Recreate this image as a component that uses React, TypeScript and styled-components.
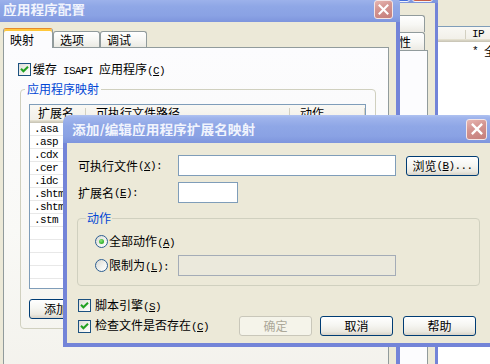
import React from "react";
import styled, { createGlobalStyle, css } from "styled-components";

const CJK = `"Noto Sans CJK SC", "Noto Sans", sans-serif`;
const MONO = `"Liberation Mono", "DejaVu Sans Mono", monospace`;

const GlobalStyle = createGlobalStyle`
  html, body { margin: 0; padding: 0; background: #ece9d8; overflow: hidden; }
  *, *::before, *::after { box-sizing: border-box; }
`;

const Desktop = styled.div`
  position: relative;
  width: 490px;
  height: 364px;
  overflow: hidden;
  background: #ece9d8;
  font-family: ${CJK};
  font-size: 12px;
  line-height: 14px;
  color: #000;
`;

const Win = styled.div<{ $x: number; $y: number; $w: number; $h: number }>`
  position: absolute;
  left: ${(p) => p.$x}px;
  top: ${(p) => p.$y}px;
  width: ${(p) => p.$w}px;
  height: ${(p) => p.$h}px;
  display: flex;
  flex-direction: column;
`;

const TitleBar = styled.div<{ $h: number; $pl: number; $bottom?: boolean }>`
  flex: none;
  height: ${(p) => p.$h}px;
  padding-left: ${(p) => p.$pl}px;
  display: flex;
  align-items: ${(p) => (p.$bottom ? "flex-end" : "center")};
  padding-bottom: ${(p) => (p.$bottom ? 1 : 0)}px;
  background: linear-gradient(
    180deg,
    #b0c3f1 0%,
    #9fb4ec 10%,
    #8fa7e6 40%,
    #8aa2e4 75%,
    #7e95dd 100%
  );
  border-radius: 7px 7px 0 0;
  overflow: hidden;
`;

const TitleText = styled.span`
  flex: 1;
  font-size: 13.7px;
  font-weight: 700;
  color: #f1f4fd;
  white-space: nowrap;
  overflow: hidden;
`;

const CloseBox = styled.div<{ $size: number; $mr: number }>`
  flex: none;
  width: ${(p) => p.$size}px;
  height: ${(p) => p.$size}px;
  margin-right: ${(p) => p.$mr}px;
  border: 1px solid #f4e6e6;
  border-radius: 3px;
  background: linear-gradient(160deg, #e7b6b1 0%, #d49591 40%, #c57e7b 100%);
  display: flex;
  align-items: center;
  justify-content: center;
`;

const CapButton = styled.div<{ $tone: "blue" | "red"; $mr: number }>`
  flex: none;
  width: 21px;
  height: 21px;
  margin-right: ${(p) => p.$mr}px;
  border: 1px solid #f2f4fb;
  border-radius: 3px;
  background: ${(p) =>
    p.$tone === "red"
      ? "linear-gradient(160deg, #e6a595 0%, #cf6a55 60%, #c0553f 100%)"
      : "linear-gradient(160deg, #9db8f3 0%, #5d84e2 60%, #3d68d8 100%)"};
`;

const Frame = styled.div<{ $b: number }>`
  flex: 1;
  min-height: 0;
  display: flex;
  flex-direction: column;
  background: #ece9d8;
  border: ${(p) => p.$b}px solid #7384d8;
  border-top: none;
`;

/* ---------- generic controls ---------- */

const Asc = styled.span`
  font-family: ${MONO};
  font-size: 11px;
  letter-spacing: -0.6px;
`;

const Mn = ({ k }: { k: string }) => (
  <Asc>
    (<u>{k}</u>)
  </Asc>
);

const CheckBoxBox = styled.span`
  flex: none;
  width: 13px;
  height: 13px;
  border: 1px solid #1c5180;
  background: linear-gradient(135deg, #dcdcd7 0%, #f1f1ec 55%, #ffffff 100%);
  display: flex;
  align-items: center;
  justify-content: center;
`;

const CheckBox = () => (
  <CheckBoxBox>
    <svg width="9" height="9" viewBox="0 0 9 9">
      <path d="M1 3.8 L3.4 6.3 L8 1.7" stroke="#21a121" strokeWidth="2" fill="none" />
    </svg>
  </CheckBoxBox>
);

const RadioCircle = styled.span`
  flex: none;
  width: 13px;
  height: 13px;
  border-radius: 50%;
  border: 1px solid #2c5e92;
  background: linear-gradient(135deg, #d8d8d2 0%, #f2f2ee 55%, #ffffff 100%);
  display: flex;
  align-items: center;
  justify-content: center;
`;

const RadioDot = styled.span`
  width: 5px;
  height: 5px;
  border-radius: 50%;
  background: radial-gradient(circle at 40% 35%, #8be57b 0%, #3fb93a 55%, #1f9a1f 100%);
`;

const CheckRow = styled.div<{ $mt?: number; $ml?: number; $h?: number }>`
  display: flex;
  align-items: center;
  height: ${(p) => p.$h ?? 13}px;
  margin-top: ${(p) => p.$mt ?? 0}px;
  margin-left: ${(p) => p.$ml ?? 0}px;
  white-space: nowrap;
`;

const CheckText = styled.span<{ $gap: number }>`
  margin-left: ${(p) => p.$gap}px;
  white-space: nowrap;
`;

const PushButton = styled.div<{ $w: number; $ml?: number; $mt?: number; $disabled?: boolean }>`
  flex: none;
  width: ${(p) => p.$w}px;
  height: 20px;
  margin-left: ${(p) => p.$ml ?? 0}px;
  margin-top: ${(p) => p.$mt ?? 0}px;
  display: flex;
  align-items: center;
  justify-content: center;
  border: 1px solid #003c74;
  border-radius: 3px;
  background: linear-gradient(180deg, #ffffff 0%, #f6f6f2 45%, #ebe9e1 80%, #d8d3c8 100%);
  white-space: nowrap;
  ${(p) =>
    p.$disabled &&
    css`
      border-color: #c9c7ba;
      background: #f5f4ea;
      color: #aca899;
    `}
`;

const TextBox = styled.div<{ $w: number; $disabled?: boolean }>`
  flex: none;
  width: ${(p) => p.$w}px;
  height: 21px;
  border: 1px solid #7f9db9;
  background: #ffffff;
  ${(p) =>
    p.$disabled &&
    css`
      border-color: #a4acb7;
      background: #ebe9dc;
    `}
`;

const Group = styled.fieldset<{ $mt: number; $ml: number; $pad: string }>`
  margin: ${(p) => p.$mt}px 0 0 ${(p) => p.$ml}px;
  padding: ${(p) => p.$pad};
  border: 1px solid #d0d0bf;
  border-radius: 4px;
  min-width: 0;
`;

const Legend = styled.legend<{ $px: number }>`
  padding: 0 ${(p) => p.$px}px;
  color: #0046d5;
  font-size: 12px;
  line-height: 14px;
`;

/* ---------- list view ---------- */

const ListView = styled.div<{ $h?: number; $ml?: number }>`
  margin-left: ${(p) => p.$ml ?? 0}px;
  height: ${(p) => (p.$h ? `${p.$h}px` : "auto")};
  border: 1px solid #7f9db9;
  background: #ffffff;
  overflow: hidden;
`;

const ListHeader = styled.div<{ $h: number }>`
  display: flex;
  height: ${(p) => p.$h}px;
  background: linear-gradient(180deg, #f9f8f4 0%, #f0eee6 100%);
  box-shadow: inset 0 -1px 0 #cbc7b8, inset 0 -2px 0 #d6d2c2, inset 0 -3px 0 #e4e0d0;
`;

const HeadCell = styled.div<{ $w?: number; $pl: number }>`
  flex: ${(p) => (p.$w ? `0 0 ${p.$w}px` : "1")};
  padding-left: ${(p) => p.$pl}px;
  padding-bottom: 2px;
  display: flex;
  align-items: center;
  white-space: nowrap;
  overflow: hidden;
  background: linear-gradient(#d3d0c1, #d3d0c1) right 3px / 1px calc(100% - 6px) no-repeat;
`;

const ListRow = styled.div<{ $h: number; $grid?: boolean }>`
  display: flex;
  height: ${(p) => p.$h}px;
  border-bottom: ${(p) => (p.$grid ? "1px solid #e8e8e8" : "none")};
`;

const Cell = styled.div<{ $w?: number; $pl: number }>`
  flex: ${(p) => (p.$w ? `0 0 ${p.$w}px` : "1")};
  padding-left: ${(p) => p.$pl}px;
  display: flex;
  align-items: center;
  white-space: nowrap;
  overflow: hidden;
`;

/* ---------- config dialog ---------- */

const ConfigClient = styled.div`
  flex: 1;
  display: flex;
  flex-direction: column;
  padding: 6px 7px 0 7px;
`;

const TabStrip = styled.div`
  position: relative;
  z-index: 1;
  display: flex;
  align-items: flex-end;
  height: 20px;
  margin-bottom: -1px;
`;

const Tab = styled.div<{ $w: number; $active?: boolean }>`
  flex: none;
  width: ${(p) => p.$w}px;
  height: ${(p) => (p.$active ? 20 : 16)}px;
  margin-bottom: ${(p) => (p.$active ? 0 : 1)}px;
  padding-left: 6px;
  display: flex;
  align-items: center;
  border: 1px solid #919b9c;
  border-bottom: none;
  border-radius: 3px 3px 0 0;
  white-space: nowrap;
  overflow: hidden;
  background: linear-gradient(180deg, #ffffff 0%, #f7f7f4 50%, #ebeae3 100%);
  ${(p) =>
    p.$active &&
    css`
      background: #fcfcfe;
      border-top: 1px solid #e68b2c;
      box-shadow: inset 0 2px 0 #ffc83c;
      padding-top: 2px;
    `}
`;

const TabPage = styled.div`
  flex: 1;
  display: flex;
  flex-direction: column;
  border: 1px solid #919b9c;
  background: linear-gradient(180deg, #fcfcfe 0%, #f9f9f6 55%, #f3f2ec 100%);
  padding: 15px 12px 0 14px;
`;

/* ---------- mapping dialog ---------- */

const MapBody = styled.div`
  flex: 1;
  display: flex;
  flex-direction: column;
  padding: 12px 11px 0 11px;
`;

const FieldRow = styled.div<{ $mt?: number; $ml?: number }>`
  display: flex;
  align-items: center;
  height: 21px;
  margin-top: ${(p) => p.$mt ?? 0}px;
  margin-left: ${(p) => p.$ml ?? 0}px;
`;

const FieldLabel = styled.div<{ $w: number }>`
  flex: none;
  width: ${(p) => p.$w}px;
  display: flex;
  align-items: center;
  white-space: nowrap;
`;

const BottomRow = styled.div`
  display: flex;
  align-items: center;
  height: 20px;
  margin-top: 4px;
  padding-right: 4px;
`;

const Spacer = styled.div`
  flex: 1;
`;

/* ---------- back windows ---------- */

const MidBody = styled.div`
  flex: 1;
  display: flex;
  flex-direction: column;
  padding: 12px 7px 0 0;
`;

const MidTabRow = styled.div<{ $h: number }>`
  display: flex;
  justify-content: flex-end;
  align-items: flex-end;
  height: ${(p) => p.$h}px;
  padding-right: 3px;
`;

const MidTab = styled.div<{ $w: number }>`
  flex: none;
  width: ${(p) => p.$w}px;
  height: 100%;
  display: flex;
  align-items: center;
  justify-content: center;
  border: 1px solid #919b9c;
  border-bottom: none;
  border-radius: 3px 3px 0 0;
  background: linear-gradient(180deg, #ffffff 0%, #f7f7f4 55%, #eceae3 100%);
  white-space: nowrap;
`;

const MidPage = styled.div`
  flex: 1;
  border: 1px solid #919b9c;
  background: #fcfcfe;
`;

const FarBody = styled.div`
  flex: 1;
  display: flex;
  flex-direction: column;
  padding: 26px 0 0 0;
  background: #ece9d8;
`;

const FarList = styled(ListView)`
  flex: 1;
`;

const XGlyph = ({ s }: { s: number }) => (
  <svg width={s} height={s} viewBox="0 0 10 10">
    <path d="M1.4 1.4 L8.6 8.6 M8.6 1.4 L1.4 8.6" stroke="#ffffff" strokeWidth="1.9" strokeLinecap="square" />
  </svg>
);

const mappings: [string, string, string][] = [
  [".asa", "C:\\WINDOWS\\system32\\inetsrv\\asp.dll", "GET,HEAD,POST,TRACE"],
  [".asp", "C:\\WINDOWS\\system32\\inetsrv\\asp.dll", "GET,HEAD,POST,TRACE"],
  [".cdx", "C:\\WINDOWS\\system32\\inetsrv\\asp.dll", "GET,HEAD,POST,TRACE"],
  [".cer", "C:\\WINDOWS\\system32\\inetsrv\\asp.dll", "GET,HEAD,POST,TRACE"],
  [".idc", "C:\\WINDOWS\\system32\\inetsrv\\httpodbc.dll", "OPTIONS,GET,HEAD,POST"],
  [".shtm", "C:\\WINDOWS\\system32\\inetsrv\\ssinc.dll", "GET,POST"],
  [".shtml", "C:\\WINDOWS\\system32\\inetsrv\\ssinc.dll", "GET,POST"],
  [".stm", "C:\\WINDOWS\\system32\\inetsrv\\ssinc.dll", "GET,POST"],
  ["", "", ""],
  ["", "", ""],
  ["", "", ""],
  ["", "", ""],
  ["", "", ""],
];

export default function App() {
  return (
    <>
      <GlobalStyle />
      <Desktop>
        {/* far window (behind everything) */}
        <Win $x={400} $y={-27} $w={130} $h={420}>
          <TitleBar $h={27} $pl={8}>
            <TitleText />
          </TitleBar>
          <Frame $b={4}>
            <FarBody>
              <FarList>
                <ListHeader $h={15}>
                  <HeadCell $w={61} $pl={6}>描述</HeadCell>
                  <HeadCell $pl={6}>
                    <Asc>IP&nbsp;</Asc>地址
                  </HeadCell>
                </ListHeader>
                <ListRow $h={18}>
                  <Cell $w={61} $pl={6} />
                  <Cell $pl={6}>
                    <Asc>*&nbsp;</Asc>全部未分配
                  </Cell>
                </ListRow>
              </FarList>
            </FarBody>
          </Frame>
        </Win>

        {/* middle window */}
        <Win $x={290} $y={-26} $w={148} $h={400}>
          <TitleBar $h={29} $pl={8} $bottom>
            <TitleText />
            <CapButton $tone="blue" $mr={2} />
            <CapButton $tone="red" $mr={5} />
          </TitleBar>
          <Frame $b={3}>
            <MidBody>
              <MidTabRow $h={17}>
                <MidTab $w={120}>自定义错误</MidTab>
              </MidTabRow>
              <MidTabRow $h={18}>
                <MidTab $w={88}>目录安全性</MidTab>
              </MidTabRow>
              <MidPage />
            </MidBody>
          </Frame>
        </Win>

        {/* application configuration dialog */}
        <Win $x={-8} $y={-4} $w={408} $h={390}>
          <TitleBar $h={26} $pl={11}>
            <TitleText>应用程序配置</TitleText>
            <CloseBox $size={19} $mr={7}>
              <XGlyph s={11} />
            </CloseBox>
          </TitleBar>
          <Frame $b={4}>
            <ConfigClient>
              <TabStrip>
                <Tab $w={50} $active>映射</Tab>
                <Tab $w={47}>选项</Tab>
                <Tab $w={47}>调试</Tab>
              </TabStrip>
              <TabPage>
                <CheckRow>
                  <CheckBox />
                  <CheckText $gap={2}>
                    缓存<Asc>&nbsp;ISAPI&nbsp;</Asc>应用程序<Mn k="C" />
                  </CheckText>
                </CheckRow>
                <Group $mt={6} $ml={2} $pad="8px 9px 9px 4px">
                  <Legend $px={2}>应用程序映射</Legend>
                  <ListView $h={185} $ml={4}>
                    <ListHeader $h={18}>
                      <HeadCell $w={56} $pl={8}>扩展名</HeadCell>
                      <HeadCell $w={204} $pl={10}>可执行文件路径</HeadCell>
                      <HeadCell $w={75} $pl={10}>动作</HeadCell>
                    </ListHeader>
                    {mappings.map(([ext, path, verbs], i) => (
                      <ListRow key={i} $h={13} $grid>
                        <Cell $w={56} $pl={4}>
                          <Asc>{ext}</Asc>
                        </Cell>
                        <Cell $w={204} $pl={6}>
                          <Asc>{path}</Asc>
                        </Cell>
                        <Cell $w={75} $pl={6}>
                          <Asc>{verbs}</Asc>
                        </Cell>
                      </ListRow>
                    ))}
                  </ListView>
                  <PushButton $w={90} $ml={4} $mt={10}>
                    添加<Mn k="D" />
                    <Asc>...</Asc>
                  </PushButton>
                </Group>
              </TabPage>
            </ConfigClient>
          </Frame>
        </Win>

        {/* add / edit mapping dialog */}
        <Win $x={63} $y={115} $w={432} $h={232}>
          <TitleBar $h={28} $pl={9}>
            <TitleText>添加/编辑应用程序扩展名映射</TitleText>
            <CloseBox $size={21} $mr={8}>
              <XGlyph s={12} />
            </CloseBox>
          </TitleBar>
          <Frame $b={4}>
            <MapBody>
              <FieldRow>
                <FieldLabel $w={100}>
                  可执行文件<Mn k="X" />
                  <Asc>:</Asc>
                </FieldLabel>
                <TextBox $w={218} />
                <PushButton $w={73} $ml={10}>
                  浏览<Mn k="B" />
                  <Asc>...</Asc>
                </PushButton>
              </FieldRow>
              <FieldRow $mt={6}>
                <FieldLabel $w={100}>
                  扩展名<Mn k="E" />
                  <Asc>:</Asc>
                </FieldLabel>
                <TextBox $w={60} />
              </FieldRow>
              <Group $mt={8} $ml={-1} $pad="10px 10px 9px 8px">
                <Legend $px={1}>动作</Legend>
                <CheckRow $ml={9}>
                  <RadioCircle>
                    <RadioDot />
                  </RadioCircle>
                  <CheckText $gap={1}>
                    全部动作<Mn k="A" />
                  </CheckText>
                </CheckRow>
                <FieldRow $mt={7} $ml={9}>
                  <FieldLabel $w={83}>
                    <RadioCircle />
                    <CheckText $gap={1}>
                      限制为<Mn k="L" />
                      <Asc>:</Asc>
                    </CheckText>
                  </FieldLabel>
                  <TextBox $w={218} $disabled />
                </FieldRow>
              </Group>
              <CheckRow $mt={13}>
                <CheckBox />
                <CheckText $gap={4}>
                  脚本引擎<Mn k="S" />
                </CheckText>
              </CheckRow>
              <BottomRow>
                <CheckBox />
                <CheckText $gap={4}>
                  检查文件是否存在<Mn k="C" />
                </CheckText>
                <Spacer />
                <PushButton $w={73} $disabled>确定</PushButton>
                <PushButton $w={73} $ml={8}>取消</PushButton>
                <PushButton $w={73} $ml={10}>帮助</PushButton>
              </BottomRow>
            </MapBody>
          </Frame>
        </Win>
      </Desktop>
    </>
  );
}
